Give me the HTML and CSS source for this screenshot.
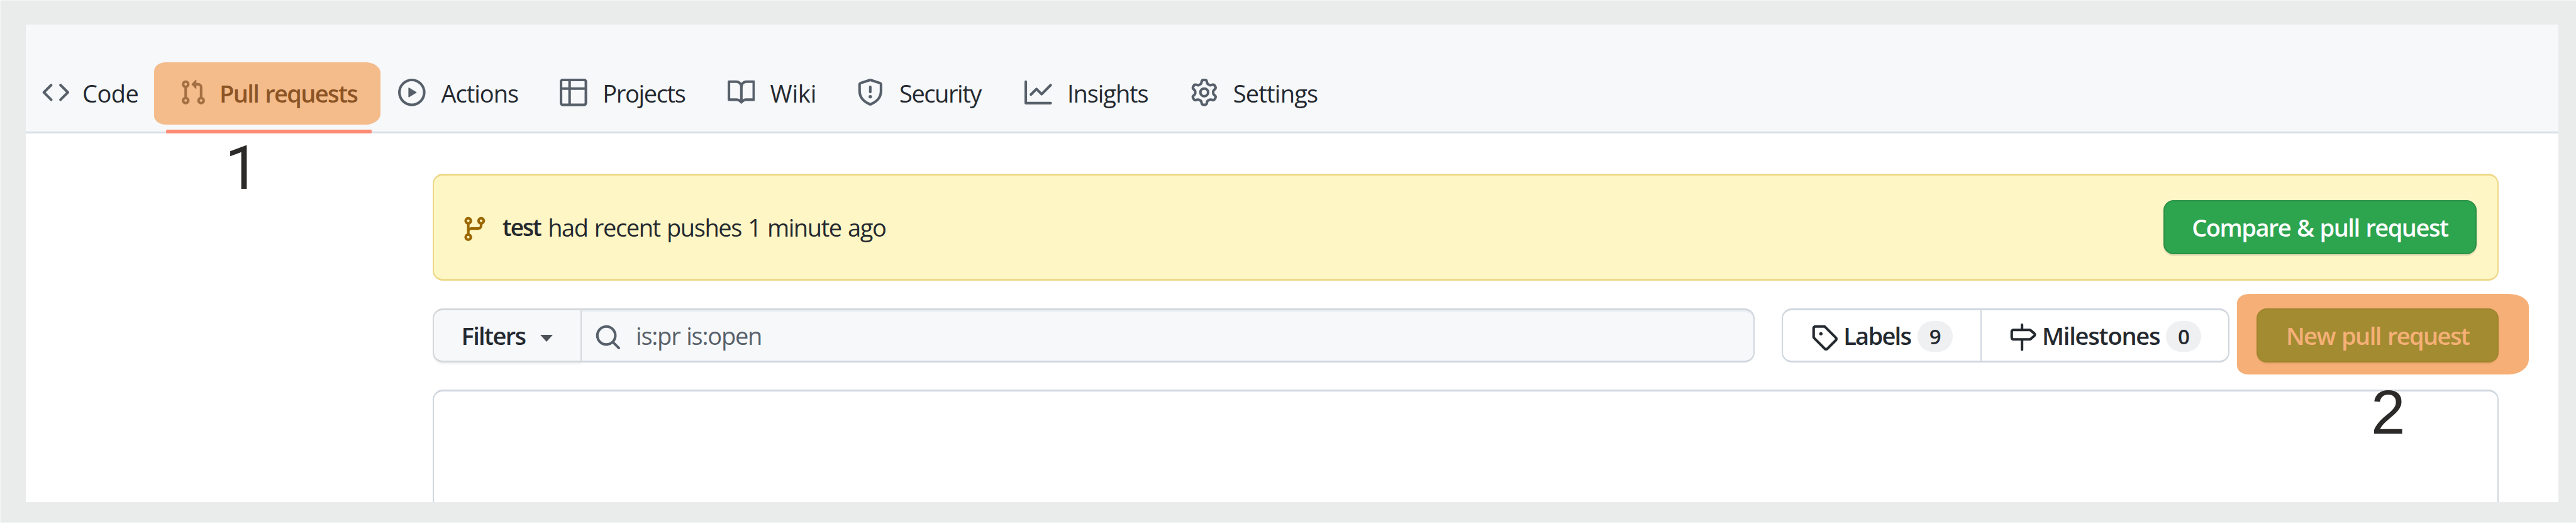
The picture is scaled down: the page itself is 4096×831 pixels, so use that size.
FILE: index.html
```html
<!DOCTYPE html>
<html lang="en">
<head>
<meta charset="utf-8">
<title>Pull requests</title>
<link rel="stylesheet" href="styles.css">
</head>
<body>
<div class="window">
  <header class="header">
    <nav class="tabs">
      <a class="tab tab-code"><svg class="icon" viewBox="0 0 16 16"><path fill-rule="evenodd" d="M4.72 3.22a.75.75 0 011.06 1.06L2.06 8l3.72 3.72a.75.75 0 11-1.06 1.06L.47 8.53a.75.75 0 010-1.06l4.25-4.25zm6.56 0a.75.75 0 10-1.06 1.06L13.94 8l-3.72 3.72a.75.75 0 101.06 1.06l4.25-4.25a.75.75 0 000-1.06l-4.25-4.25z"/></svg><span class="label">Code</span></a>
      <a class="tab tab-pulls"><svg class="icon" viewBox="0 0 16 16"><path fill-rule="evenodd" d="M7.177 3.073L9.573.677A.25.25 0 0110 .854v4.792a.25.25 0 01-.427.177L7.177 3.427a.25.25 0 010-.354zM3.75 2.5a.75.75 0 100 1.5.75.75 0 000-1.5zm-2.25.75a2.25 2.25 0 113 2.122v5.256a2.251 2.251 0 11-1.5 0V5.372A2.25 2.25 0 011.5 3.25zM11 2.5h-1V4h1a1 1 0 011 1v5.628a2.251 2.251 0 101.5 0V5A2.5 2.5 0 0011 2.5zm1 10.25a.75.75 0 111.5 0 .75.75 0 01-1.5 0zM3.75 12a.75.75 0 100 1.5.75.75 0 000-1.5z"/></svg><span class="label">Pull requests</span><span class="underline"></span><span class="marker marker-tab"></span></a>
      <a class="tab tab-actions"><svg class="icon" viewBox="0 0 16 16"><path fill-rule="evenodd" d="M1.5 8a6.5 6.5 0 1113 0 6.5 6.5 0 01-13 0zM8 0a8 8 0 100 16A8 8 0 008 0zM6.379 5.227A.25.25 0 006 5.442v5.117a.25.25 0 00.379.214l4.264-2.559a.25.25 0 000-.428L6.379 5.227z"/></svg><span class="label">Actions</span></a>
      <a class="tab tab-projects"><svg class="icon" viewBox="0 0 16 16"><path fill-rule="evenodd" d="M1.75 0h12.5C15.217 0 16 .783 16 1.75v12.5A1.75 1.75 0 0114.25 16H1.75A1.75 1.75 0 010 14.25V1.75C0 .783.783 0 1.75 0zM1.5 6.5v7.75c0 .138.112.25.25.25H5v-8zM6.5 6.5v8h7.75a.25.25 0 00.25-.25V6.5zM14.5 5V1.75a.25.25 0 00-.25-.25H6.5V5zM5 5V1.5H1.75a.25.25 0 00-.25.25V5z"/></svg><span class="label">Projects</span></a>
      <a class="tab tab-wiki"><svg class="icon" viewBox="0 0 16 16"><path fill-rule="evenodd" d="M0 1.75A.75.75 0 01.75 1h4.253c1.227 0 2.317.59 3 1.501A3.744 3.744 0 0111.006 1h4.245a.75.75 0 01.75.75v10.5a.75.75 0 01-.75.75h-4.507a2.25 2.25 0 00-1.591.659l-.622.621a.75.75 0 01-1.06 0l-.622-.621A2.25 2.25 0 005.258 13H.75a.75.75 0 01-.75-.75V1.75zm8.755 3a2.25 2.25 0 012.25-2.25H14.5v9h-3.757c-.71 0-1.4.201-1.992.572l.004-7.322zm-1.504 7.324l.004-5.073-.002-2.253A2.25 2.25 0 005.003 2.5H1.5v9h3.757a3.75 3.75 0 011.994.574z"/></svg><span class="label">Wiki</span></a>
      <a class="tab tab-security"><svg class="icon" viewBox="0 0 16 16"><path fill-rule="evenodd" d="M7.467.133a1.75 1.75 0 011.066 0l5.25 1.68A1.75 1.75 0 0115 3.48V7c0 1.566-.32 3.182-1.303 4.682-.983 1.498-2.585 2.813-5.032 3.855a1.7 1.7 0 01-1.33 0c-2.447-1.042-4.049-2.357-5.032-3.855C1.32 10.182 1 8.566 1 7V3.48a1.75 1.75 0 011.217-1.667l5.25-1.68zm.61 1.429a.25.25 0 00-.153 0l-5.25 1.68a.25.25 0 00-.174.238V7c0 1.358.275 2.666 1.057 3.86.784 1.194 2.121 2.34 4.366 3.297a.2.2 0 00.154 0c2.245-.956 3.582-2.104 4.366-3.298C13.225 9.666 13.5 8.36 13.5 7V3.48a.25.25 0 00-.174-.237l-5.25-1.68zM9 10.5a1 1 0 11-2 0 1 1 0 012 0zm-.25-5.75a.75.75 0 10-1.5 0v3a.75.75 0 001.5 0v-3z"/></svg><span class="label">Security</span></a>
      <a class="tab tab-insights"><svg class="icon" viewBox="0 0 16 16"><path fill-rule="evenodd" d="M1.5 1.75a.75.75 0 00-1.5 0v12.5c0 .414.336.75.75.75h14.5a.75.75 0 000-1.5H1.5V1.75zm14.28 2.53a.75.75 0 00-1.06-1.06L10 7.94 7.53 5.47a.75.75 0 00-1.06 0L3.22 8.72a.75.75 0 001.06 1.06L7 7.06l2.47 2.47a.75.75 0 001.06 0l5.25-5.25z"/></svg><span class="label">Insights</span></a>
      <a class="tab tab-settings"><svg class="icon" viewBox="0 0 16 16"><path fill-rule="evenodd" d="M7.429 1.525a6.593 6.593 0 011.142 0c.036.003.108.036.137.146l.289 1.105c.147.56.55.967.997 1.189.174.086.341.183.501.29.417.278.97.423 1.53.27l1.102-.303c.11-.03.175.016.195.046.219.31.41.641.573.989.014.031.022.11-.059.19l-.815.806c-.411.406-.562.957-.53 1.456a4.588 4.588 0 010 .582c-.032.499.119 1.05.53 1.456l.815.806c.08.08.073.159.059.19a6.494 6.494 0 01-.573.99c-.02.029-.086.074-.195.045l-1.103-.303c-.559-.153-1.112-.008-1.529.27-.16.107-.327.204-.5.29-.449.222-.851.628-.998 1.189l-.289 1.105c-.029.11-.101.143-.137.146a6.613 6.613 0 01-1.142 0c-.036-.003-.108-.037-.137-.146l-.289-1.105c-.147-.56-.55-.967-.997-1.189a4.502 4.502 0 01-.501-.29c-.417-.278-.97-.423-1.53-.27l-1.102.303c-.11.03-.175-.016-.195-.046a6.492 6.492 0 01-.573-.989c-.014-.031-.022-.11.059-.19l.815-.806c.411-.406.562-.957.53-1.456a4.587 4.587 0 010-.582c.032-.499-.119-1.05-.53-1.456l-.815-.806c-.08-.08-.073-.159-.059-.19a6.44 6.44 0 01.573-.99c.02-.029.086-.075.195-.045l1.103.303c.559.153 1.112.008 1.529-.27.16-.107.327-.204.5-.29.449-.222.851-.628.998-1.189l.289-1.105c.029-.11.101-.143.137-.146zM8 0c-.236 0-.47.01-.701.03-.743.065-1.29.615-1.458 1.261l-.29 1.106c-.017.066-.078.158-.211.224a5.994 5.994 0 00-.668.386c-.123.082-.233.09-.3.071L3.27 2.776c-.644-.177-1.392.02-1.82.63a7.977 7.977 0 00-.704 1.217c-.315.675-.111 1.422.363 1.891l.815.806c.05.048.098.147.088.294a6.084 6.084 0 000 .772c.01.147-.038.246-.088.294l-.815.806c-.474.469-.678 1.216-.363 1.891.2.428.436.835.704 1.218.428.609 1.176.806 1.82.63l1.103-.303c.066-.019.176-.011.299.071.213.143.436.272.668.386.133.066.194.158.212.224l.289 1.106c.169.646.715 1.196 1.458 1.26a8.094 8.094 0 001.402 0c.743-.064 1.29-.614 1.458-1.26l.29-1.106c.017-.066.078-.158.211-.224a5.98 5.98 0 00.668-.386c.123-.082.233-.09.3-.071l1.102.302c.644.177 1.392-.02 1.82-.63.268-.382.505-.789.704-1.217.315-.675.111-1.422-.364-1.891l-.814-.806c-.05-.048-.098-.147-.088-.294a6.1 6.1 0 000-.772c-.01-.147.039-.246.088-.294l.814-.806c.475-.469.679-1.216.364-1.891a7.992 7.992 0 00-.704-1.218c-.428-.609-1.176-.806-1.82-.63l-1.103.303c-.066.019-.176.011-.299-.071a5.991 5.991 0 00-.668-.386c-.133-.066-.194-.158-.212-.224L10.16 1.29C9.99.645 9.444.095 8.701.031A8.094 8.094 0 008 0zm1.5 8a1.5 1.5 0 11-3 0 1.5 1.5 0 013 0zM11 8a3 3 0 11-6 0 3 3 0 016 0z"/></svg><span class="label">Settings</span></a>
    </nav>
  </header>

  <main class="content">
    <section class="flash">
      <svg class="icon" viewBox="0 0 16 16"><path fill-rule="evenodd" d="M11.75 2.5a.75.75 0 100 1.5.75.75 0 000-1.5zm-2.25.75a2.25 2.25 0 113 2.122V6A2.5 2.5 0 0110 8.5H6a1 1 0 00-1 1v1.128a2.251 2.251 0 11-1.5 0V5.372a2.25 2.25 0 111.5 0v1.836A2.492 2.492 0 016 7h4a1 1 0 001-1v-.628A2.25 2.25 0 019.5 3.25zM4.25 12a.75.75 0 100 1.5.75.75 0 000-1.5zM3.5 3.25a.75.75 0 111.5 0 .75.75 0 01-1.5 0z"/></svg>
      <strong class="branch">test</strong>
      <span class="flash-text">had recent pushes 1 minute ago</span>
      <button class="button compare">Compare &amp; pull request</button>
    </section>

    <section class="toolbar">
      <div class="search">
        <button class="filters"><span class="filters-label">Filters</span><span class="caret"></span></button>
        <div class="query">
          <svg class="icon" viewBox="0 0 16 16"><path fill-rule="evenodd" d="M11.5 7a4.499 4.499 0 11-8.998 0A4.499 4.499 0 0111.5 7zm-.82 4.74a6 6 0 111.06-1.06l3.04 3.04a.75.75 0 11-1.06 1.06l-3.04-3.04z"/></svg>
          <span class="query-text">is:pr is:open</span>
        </div>
      </div>
      <div class="subnav">
        <a class="subnav-item labels"><svg class="icon" viewBox="0 0 16 16"><path fill-rule="evenodd" d="M2.5 7.775V2.75a.25.25 0 01.25-.25h5.025a.25.25 0 01.177.073l6.25 6.25a.25.25 0 010 .354l-5.025 5.025a.25.25 0 01-.354 0l-6.25-6.25a.25.25 0 01-.073-.177zm-1.5 0V2.75C1 1.784 1.784 1 2.75 1h5.025c.464 0 .91.184 1.238.513l6.25 6.25a1.75 1.75 0 010 2.474l-5.026 5.026a1.75 1.75 0 01-2.474 0l-6.25-6.25A1.75 1.75 0 011 7.775zM6 5a1 1 0 100 2 1 1 0 000-2z"/></svg><span class="subnav-label">Labels</span><span class="counter">9</span></a>
        <a class="subnav-item milestones"><svg class="icon" viewBox="0 0 16 16"><path fill-rule="evenodd" d="M7.75 0a.75.75 0 01.75.75V3h3.634c.414 0 .814.147 1.13.414l2.07 1.75a1.75 1.75 0 010 2.672l-2.07 1.75a1.75 1.75 0 01-1.13.414H8.5v5.25a.75.75 0 11-1.5 0V10H2.75A1.75 1.75 0 011 8.25v-3.5C1 3.784 1.784 3 2.75 3H7V.75A.75.75 0 017.75 0zm0 8.5h4.384a.25.25 0 00.161-.06l2.07-1.75a.25.25 0 000-.38l-2.07-1.75a.25.25 0 00-.161-.06H2.75a.25.25 0 00-.25.25v3.5c0 .138.112.25.25.25h5z"/></svg><span class="subnav-label">Milestones</span><span class="counter">0</span></a>
      </div>
      <div class="new-pull">
        <button class="button create">New pull request</button>
        <span class="marker marker-create"></span>
      </div>
    </section>

    <section class="list"></section>
  </main>

  <span class="step step-one">1</span>
  <span class="step step-two">2</span>
</div>
</body>
</html>
```
FILE: styles.css
```css
* { box-sizing: border-box; }

body {
  margin: 0;
  width: 4096px;
  height: 831px;
  overflow: hidden;
  padding: 39px 28.5px 33px 41px;
  background: #eaeceb;
  box-shadow: inset 1px 1px #f5f7f6, inset 0 -1px #f5f7f6;
  color: #24292f;
  font: 38px/52px "Open Sans", "Noto Sans", sans-serif;
}

.window {
  display: flex;
  flex-direction: column;
  height: 759px;
  background: #fff;
}

.icon {
  flex: none;
  width: 43.65px;
  height: 43.65px;
  fill: currentColor;
}

/* Repository tabs */
.header {
  height: 172.6px;
  padding: 82px 0 0 25.7px;
  background: #f6f8fa;
  border-bottom: 3px solid #d8dfe5;
}

.tabs {
  display: grid;
  grid-template-columns: 217.9px 348.9px 256.8px 266.4px 205.5px 266.9px 263.8px 300px;
}

.tab {
  position: relative;
  display: flex;
  align-items: center;
  gap: 24.3px;
  height: 52px;
}

.tab .icon { color: #57606a; }
.label { padding-top: 2px; white-space: nowrap; }
.tab-code { gap: 20.7px; }
.tab-pulls { gap: 20.8px; }
.tab-code .label { letter-spacing: -0.5px; }
.tab-pulls .label { letter-spacing: -1.65px; word-spacing: 2px; font-weight: 600; }
.tab-actions .label { letter-spacing: -1px; }
.tab-projects .label { letter-spacing: -1.35px; }
.tab-wiki .label { letter-spacing: -0.2px; }
.tab-security .label { letter-spacing: -1.45px; }
.tab-insights .label { letter-spacing: -1.07px; }
.tab-settings .label { letter-spacing: -0.8px; }

.underline {
  position: absolute;
  left: -20.4px;
  top: 85px;
  width: 326.8px;
  height: 5.6px;
  border-radius: 2px;
  background: #fd8c73;
}

.marker { position: absolute; }

.marker-tab {
  left: -39.4px;
  top: -22.3px;
  width: 360px;
  height: 99.6px;
  border-radius: 19px 24px 24px 19px / 14px 17px 17px 14px;
  background: rgba(242, 128, 28, 0.5);
}

/* Page content */
.content {
  flex: 1;
  display: flex;
  flex-direction: column;
  padding: 64.2px 94.7px 0 647.2px;
}

.flash {
  display: flex;
  align-items: center;
  height: 170px;
  padding: 0 33px 0 42.7px;
  border: 3px solid #eed888;
  border-width: 3px 2px;
  border-radius: 16px;
  background: #fff6c5;
}

.flash .icon { margin-top: 6px; color: #9a6700; }
.branch { margin-left: 22.5px; font-size: 37px; font-weight: 600; letter-spacing: -2px; }
.flash-text { margin-left: 11.5px; letter-spacing: -1.4px; word-spacing: 1.8px; }

.button {
  height: 86.3px;
  padding: 0;
  border: 2px solid #2a9147;
  border-radius: 16px;
  background: #2da44e;
  color: #fff;
  font: inherit;
  font-weight: 600;
  box-shadow: 0 3px 1px rgba(27, 31, 36, 0.1);
}

.compare { width: 498px; margin-left: auto; letter-spacing: -1.5px; word-spacing: 1.5px; }

.toolbar {
  display: grid;
  grid-template-columns: 2101.6px 712.5px 384.4px;
  justify-content: space-between;
  height: 86px;
  margin: 43.8px 0 43px;
}

.search { display: flex; }

.filters {
  display: flex;
  align-items: center;
  width: 236.8px;
  height: 86px;
  padding: 0 0 0 43.4px;
  border: 3px solid #d5d8db;
  border-width: 3px 2px;
  border-radius: 16px 0 0 16px;
  background: #f6f8fa;
  color: inherit;
  font: inherit;
  box-shadow: 0 3px 1px rgba(27, 31, 36, 0.04);
}

.filters-label { font-weight: 600; letter-spacing: -1.65px; }

.caret {
  margin: 10px 0 0 23.5px;
  border: 10.4px solid transparent;
  border-top: 11px solid #4b5157;
  border-bottom: 0;
}

.query {
  flex: 1;
  display: flex;
  align-items: center;
  padding-left: 19.7px;
  border: 3px solid #d0d7de;
  border-width: 3px 2px 3px 0;
  border-radius: 0 16px 16px 0;
  background: #f6f8fa;
  color: #57606a;
  box-shadow: inset 0 3px 1px rgba(208, 215, 222, 0.25);
}

.query .icon, .subnav .icon { margin-top: 6px; }
.query-text { margin-left: 22.7px; letter-spacing: -1.2px; word-spacing: 1px; }

.subnav {
  display: flex;
  border: 3px solid #d0d7de;
  border-width: 3px 2px;
  border-radius: 16px;
}

.subnav-item { display: flex; align-items: center; font-weight: 600; }
.labels { width: 316.6px; padding-left: 43.8px; border-right: 2px solid #d0d7de; }
.milestones { padding-left: 43px; }
.subnav-label { margin-left: 8.9px; }
.labels .subnav-label { width: 118px; letter-spacing: -1.7px; }
.milestones .subnav-label { width: 197.5px; letter-spacing: -1.2px; }

.counter {
  width: 56px;
  height: 48.6px;
  margin-top: 4px;
  border-radius: 24.3px;
  background: #eff0f2;
  font-size: 33px;
  font-weight: 600;
  line-height: 49px;
  text-align: center;
}

.new-pull { position: relative; }
.create { width: 100%; letter-spacing: -1.6px; word-spacing: 2px; }

.marker-create {
  left: -31px;
  top: -22.8px;
  width: 463.7px;
  height: 128.6px;
  border-radius: 20px 32px 32px 18px / 14px 20px 24px 14px;
  background: rgba(240, 123, 28, 0.6);
}

.list {
  flex: 1;
  border: 3px solid #d0d7de;
  border-width: 3px 2px 0;
  border-radius: 16px 16px 0 0;
}

/* Numbered step annotations */
.step {
  position: absolute;
  color: #2b2a29;
  line-height: 100px;
}

.step-one { left: 358px; top: 217px; font-family: Roboto, sans-serif; font-size: 96.5px; }
.step-two { left: 3770px; top: 605px; font-family: "Liberation Sans", sans-serif; font-size: 98px; }
```
